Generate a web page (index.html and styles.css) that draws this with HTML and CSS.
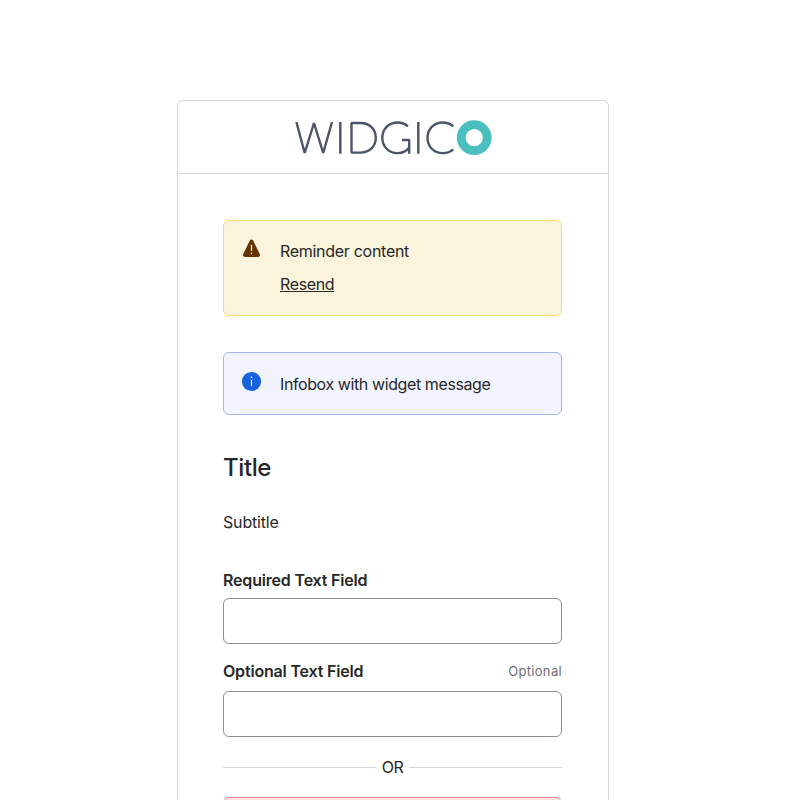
FILE: index.html
```html
<!DOCTYPE html>
<html lang="en">
<head>
<meta charset="utf-8">
<title>Widgico</title>
<link rel="stylesheet" href="styles.css">
</head>
<body>
<main class="card">
  <header class="brand">
    <svg class="logo" viewBox="0 0 200 40" role="img" aria-label="Widgico">
      <g class="strokes">
        <path d="M3.400 4 11.700 35 21 5 30.200 35 39 4"/>
        <path d="M47.300 4V35.700"/>
        <path d="M58.500 5V34.600H67.500C76.500 34.600 82.800 28.500 82.800 19.800S76.500 5 67.500 5Z"/>
        <path d="M114.900 8.400C111.900 5.700 108.300 4.500 104.600 4.500C95.600 4.500 89.300 11 89.300 19.800S95.600 35.100 104.600 35.100C109.500 35.100 113.500 33.100 116.200 29.500M109 22H116.200V35.700"/>
        <path d="M125.300 4V35.700"/>
        <path d="M160.300 8.400C157.200 5.700 153.600 4.500 149.800 4.500C140.800 4.500 134.500 11 134.500 19.800S140.800 35.100 149.800 35.100C153.600 35.100 157.200 34 160.300 31.300"/>
      </g>
      <circle class="ring" cx="181.200" cy="19.700" r="13"/>
    </svg>
  </header>
  <div class="content">
    <section class="notice warning">
      <svg class="notice-icon" viewBox="0 0 20 20"><path fill="#663300" d="M7.700 1.700Q9.500-.5 11.300 1.700L17.700 15Q18.600 18 16 18H3Q.4 18 1.300 15Z"/><path d="M9.500 5.700V12M9.500 13.500V15.300" stroke="#fbf3db" stroke-width="1.300"/></svg>
      <div><p>Reminder content</p><a class="resend">Resend</a></div>
    </section>
    <section class="notice info">
      <svg class="notice-icon" viewBox="0 0 20 20"><circle cx="9.500" cy="10.500" r="9.600" fill="#1662dd"/><path d="M9.500 5.500V7M9.500 8.700V15" stroke="#fff" stroke-width="1.200"/></svg>
      <p>Infobox with widget message</p>
    </section>
    <h1>Title</h1>
    <p class="subtitle">Subtitle</p>
    <div class="field">
      <label for="required">Required Text Field</label>
      <input id="required" type="text">
    </div>
    <div class="field second">
      <div class="label-row"><label for="optional">Optional Text Field</label><span class="optional">Optional</span></div>
      <input id="optional" type="text">
    </div>
    <div class="divider">OR</div>
    <div class="error"></div>
  </div>
</main>
</body>
</html>
```
FILE: styles.css
```css
* { box-sizing: border-box; }
body { margin: 0; background: #fff; color: #272727; font: 16px/24px Inter, sans-serif; }
p, h1 { margin: 0; }
.card { width: 432px; height: 700px; margin: 100px auto 0 177px; border: 1px solid #d7d7d7; border-bottom: 0; border-radius: 6px 6px 0 0; overflow: hidden; }
.brand { height: 73px; border-bottom: 1px solid #d7d7d7; padding: 17px 0 0 115px; }
.logo { display: block; width: 200px; height: 40px; }
.strokes { fill: none; stroke: #4b5567; stroke-width: 2.4; stroke-linejoin: bevel; }
.ring { fill: none; stroke: #4bbfbf; stroke-width: 8.8; }
.content { padding: 46px 46px 0 45px; }
.notice { display: flex; gap: 18px; border: 1px solid; border-radius: 6px; padding: 18px; }
.notice-icon { width: 20px; height: 20px; flex: none; overflow: visible; }
.warning { height: 96px; background: #faf4dd; border-color: #fadc79; letter-spacing: -0.29px; }
.resend { display: block; width: fit-content; margin-top: 9px; text-decoration: underline; letter-spacing: -0.38px; }
.info { height: 63px; margin-top: 36px; background: #f1f4ff; border-color: #a7b5ec; letter-spacing: -0.4px; }
.info p { margin-top: 1px; }
h1 { margin-top: 37px; font-size: 24px; line-height: 32px; font-weight: 500; letter-spacing: -0.4px; }
.subtitle { margin-top: 26px; letter-spacing: -0.17px; }
.field { margin-top: 34px; }
label { display: block; font-weight: 600; line-height: 24px; letter-spacing: -0.18px; }
input { display: block; width: 339px; height: 46px; margin-top: 6px; border: 1px solid #8c8c96; border-radius: 6px; background: #fff; }
.second { margin-top: 15px; }
.second input { margin-top: 8px; }
.label-row { display: flex; justify-content: space-between; }
.optional { font-size: 13px; color: #6e6e78; letter-spacing: 0.33px; }
.divider { display: flex; align-items: center; gap: 6px; margin-top: 18px; letter-spacing: -0.4px; }
.divider::before, .divider::after { content: ""; height: 1px; flex: 1; background: #d7d7d7; }
.error { height: 70px; margin-top: 18px; background: #fde0e1; border: 1px solid #ee8e91; border-radius: 6px; }
```
